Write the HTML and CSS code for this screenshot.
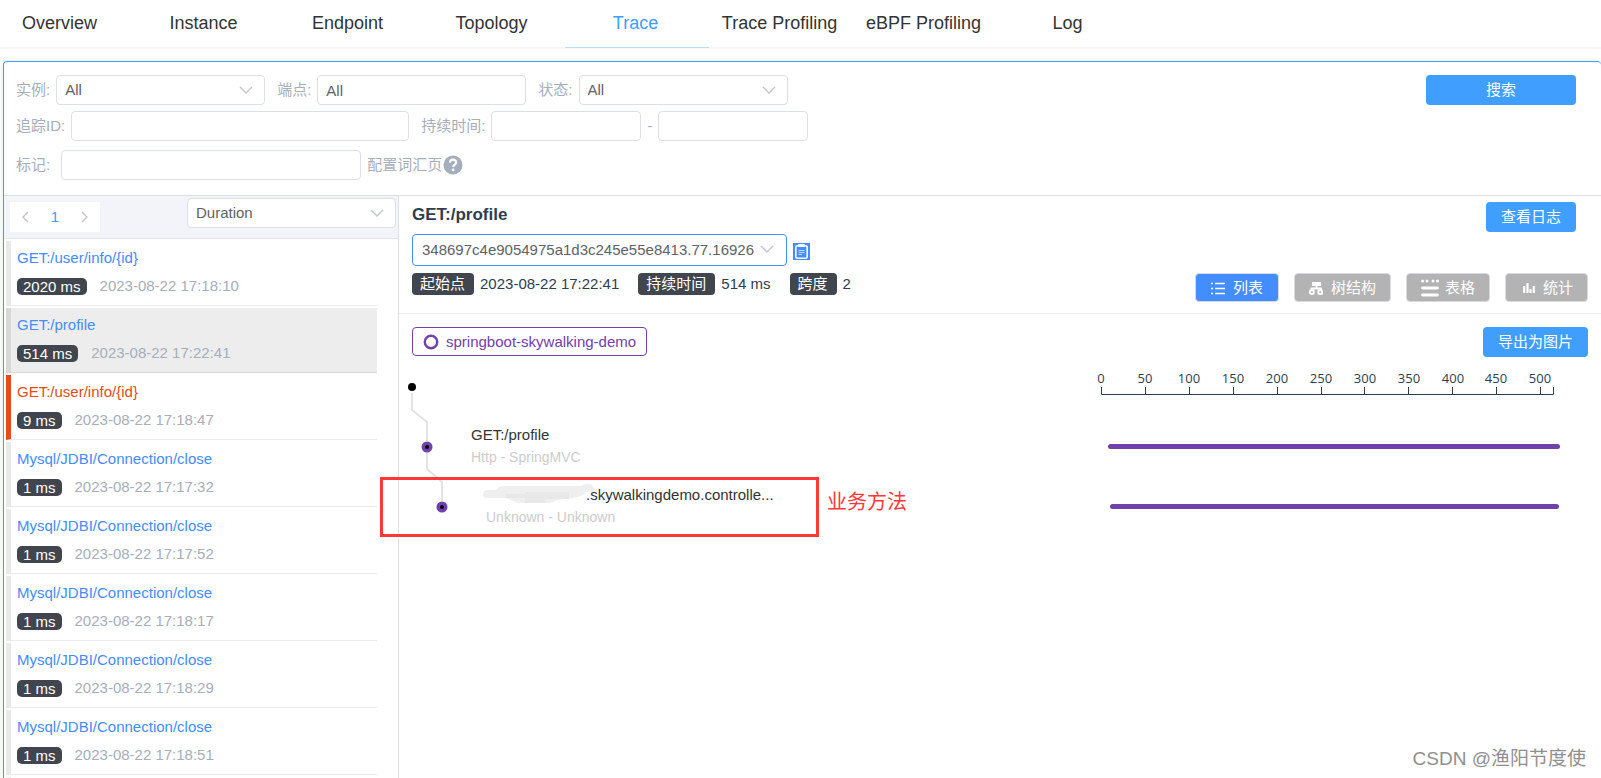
FILE: index.html
```html
<!DOCTYPE html>
<html lang="zh-CN">
<head>
<meta charset="utf-8">
<title>Trace</title>
<link rel="stylesheet" href="styles.css">
</head>
<body>
<nav class="tabs">
  <a class="tab" href="#">Overview</a>
  <a class="tab" href="#">Instance</a>
  <a class="tab" href="#">Endpoint</a>
  <a class="tab" href="#">Topology</a>
  <a class="tab active" href="#">Trace</a>
  <a class="tab" href="#">Trace Profiling</a>
  <a class="tab" href="#">eBPF Profiling</a>
  <a class="tab" href="#">Log</a>
</nav>

<main class="panel">
  <form class="filters">
    <div class="filter-row">
      <div class="field">
        <label for="instance">实例:</label>
        <span class="select"><select id="instance"><option>All</option></select><svg class="chevron" viewBox="0 0 14 8"><path d="M1 1l6 6 6-6"/></svg></span>
      </div>
      <div class="field">
        <label for="endpoint">端点:</label>
        <input class="box" id="endpoint" type="text" value="All">
      </div>
      <div class="field">
        <label for="status">状态:</label>
        <span class="select"><select id="status"><option>All</option></select><svg class="chevron" viewBox="0 0 14 8"><path d="M1 1l6 6 6-6"/></svg></span>
      </div>
      <button class="btn search" type="button">搜索</button>
    </div>
    <div class="filter-row">
      <div class="field">
        <label for="trace-id">追踪ID:</label>
        <input class="box wide" id="trace-id" type="text">
      </div>
      <div class="field">
        <label for="min">持续时间:</label>
        <input class="box short" id="min" type="text">
        <span>-</span>
        <input class="box short" type="text" aria-label="最大持续时间">
      </div>
    </div>
    <div class="filter-row tags-row">
      <label for="tags">标记:</label>
      <input class="box medium" id="tags" type="text">
      <span class="vocab">配置词汇页<svg class="help" viewBox="0 0 20 20"><circle cx="10" cy="10" r="9.5" fill="#a7aebb"/><path d="M6.9 7.6C7 5.600 8.300 4.700 10 4.700c1.800 0 3.200 1 3.200 2.700 0 2.200-2.900 2.300-2.900 4.500" fill="none" stroke="#fff" stroke-width="2.200"/><circle cx="10.200" cy="14.800" r="1.400" fill="#fff"/></svg></span>
    </div>
  </form>

  <div class="content">
    <aside class="sidebar">
      <div class="list-head">
        <div class="pager">
          <button type="button" aria-label="上一页"><svg viewBox="0 0 8 12"><path d="M7 1L2 6l5 5"/></svg></button>
          <span class="page">1</span>
          <button type="button" aria-label="下一页"><svg viewBox="0 0 8 12"><path d="M1 1l5 5-5 5"/></svg></button>
        </div>
        <span class="select"><select aria-label="排序"><option>Duration</option></select><svg class="chevron" viewBox="0 0 14 8"><path d="M1 1l6 6 6-6"/></svg></span>
      </div>
      <ul class="traces">
        <li><a href="#">GET:/user/info/{id}</a><div class="meta"><b>2020 ms</b><time>2023-08-22 17:18:10</time></div></li>
        <li class="selected"><a href="#">GET:/profile</a><div class="meta"><b>514 ms</b><time>2023-08-22 17:22:41</time></div></li>
        <li class="error"><a href="#">GET:/user/info/{id}</a><div class="meta"><b>9 ms</b><time>2023-08-22 17:18:47</time></div></li>
        <li><a href="#">Mysql/JDBI/Connection/close</a><div class="meta"><b>1 ms</b><time>2023-08-22 17:17:32</time></div></li>
        <li><a href="#">Mysql/JDBI/Connection/close</a><div class="meta"><b>1 ms</b><time>2023-08-22 17:17:52</time></div></li>
        <li><a href="#">Mysql/JDBI/Connection/close</a><div class="meta"><b>1 ms</b><time>2023-08-22 17:18:17</time></div></li>
        <li><a href="#">Mysql/JDBI/Connection/close</a><div class="meta"><b>1 ms</b><time>2023-08-22 17:18:29</time></div></li>
        <li><a href="#">Mysql/JDBI/Connection/close</a><div class="meta"><b>1 ms</b><time>2023-08-22 17:18:51</time></div></li>
        <li></li>
      </ul>
    </aside>

    <section class="detail">
      <header class="detail-head">
        <div class="title-row">
          <h1>GET:/profile</h1>
          <button class="btn" type="button">查看日志</button>
        </div>
        <div class="id-row">
          <span class="select trace-select"><select aria-label="追踪ID"><option>348697c4e9054975a1d3c245e55e8413.77.16926</option></select><svg class="chevron" viewBox="0 0 14 8"><path d="M1 1l6 6 6-6"/></svg></span>
          <button class="copy" type="button" aria-label="复制"><svg viewBox="0 0 17 17"><rect width="17" height="17" fill="#448dfe"/><rect x="2.800" y="2.800" width="11.400" height="12.400" rx="1.500" fill="none" stroke="#fff" stroke-width="1.600"/><rect x="5" y="1" width="7" height="3" rx="1" fill="#fff"/><path d="M5.500 7.500h6M5.500 9.500h6M5.500 11.500h3.500" stroke="#fff" stroke-width="1" opacity=".7"/></svg></button>
        </div>
        <div class="info-row">
          <div class="info"><span class="tag">起始点</span><span>2023-08-22 17:22:41</span></div>
          <div class="info"><span class="tag">持续时间</span><span>514 ms</span></div>
          <div class="info"><span class="tag">跨度</span><span>2</span></div>
          <div class="views">
            <button class="view on" type="button"><svg class="i14" viewBox="0 0 14 14"><path d="M4 2.500h10M4 7.500h10M4 12.500h10M0 2.500h2M0 7.500h2M0 12.500h2" stroke="#fff" stroke-width="1.700"/></svg>列表</button>
            <button class="view" type="button"><svg class="i14" viewBox="0 0 14 14"><path d="M3 1h9v4H3z" fill="#fff"/><path d="M7.500 4v3.500M2.500 10V7.500h9.500V10" fill="none" stroke="#fff" stroke-width="1.800"/><rect x="1" y="9.300" width="3.800" height="3.700" rx="1.200" fill="none" stroke="#fff" stroke-width="1.900"/><rect x="9.300" y="9.300" width="3.800" height="3.700" rx="1.200" fill="none" stroke="#fff" stroke-width="1.900"/></svg>树结构</button>
            <button class="view table" type="button"><svg class="i18" viewBox="0 0 18 18"><path d="M1.500 2h.01M6 2h.01M12 2h.01M16.500 2h.01" stroke="#fff" stroke-width="3" stroke-linecap="round"/><path d="M1.500 9h15M1.500 16h15" stroke="#fff" stroke-width="2.800" stroke-linecap="round"/></svg>表格</button>
            <button class="view stats" type="button"><svg class="i12" viewBox="0 0 12 12"><path d="M1.200 4v7M4.500 1v10M7.500 7v4M10.800 4v7" stroke="#fff" stroke-width="2.200"/></svg>统计</button>
          </div>
        </div>
      </header>

      <div class="legend-row">
        <span class="service"><svg viewBox="0 0 16 16"><circle cx="8" cy="8" r="6.200" fill="none" stroke="#7041ab" stroke-width="2.400"/></svg>springboot-skywalking-demo</span>
        <button class="btn" type="button">导出为图片</button>
      </div>

      <div class="chart">
        <svg class="tree" viewBox="0 0 440 190">
          <g fill="none" stroke="#e2e3e5" stroke-width="2"><path d="M13 36V53L28 65V84"/><path d="M28 96V112L43 125V144"/></g>
          <circle cx="13" cy="30" r="4"/>
          <g fill="#7041ab"><circle cx="28" cy="90" r="5.500"/><circle cx="43" cy="150" r="5.500"/></g>
          <circle cx="28" cy="90" r="2"/><circle cx="43" cy="150" r="2"/>
          <g class="span-name"><text x="72" y="83">GET:/profile</text><text x="187" y="143">.skywalkingdemo.controlle...</text></g>
          <g class="span-type"><text x="72" y="105">Http - SpringMVC</text><text x="87" y="165">Unknown - Unknown</text></g>
          <path d="M84 138q0-5 5-5h8q3-4 8-4h77q4-3 9-2 5 2 3 8h-7q-4 5-14 6l-14 2-8 3h-32l-12-5H88q-5-1-4-3z" fill="#efeff0"/>
          <path d="M106 137h20v4h-20zM126 135h20v11h-20zM146 135h24v7h-24z" fill="#e8e8e9"/>
        </svg>
        <svg class="timeline" viewBox="0 0 500 190">
          <path d="M13.500 30v7.500h452V30M57.500 30v7M101.500 30v7M145.500 30v7M189.500 30v7M233.500 30v7M276.500 30v7M320.500 30v7M364.500 30v7M408.500 30v7M452.500 30v7" fill="none" stroke="#2c3e50"/>
          <g class="ticks"><text x="13" y="26">0</text><text x="57" y="26">50</text><text x="101" y="26">100</text><text x="145" y="26">150</text><text x="189" y="26">200</text><text x="233" y="26">250</text><text x="277" y="26">300</text><text x="321" y="26">350</text><text x="365" y="26">400</text><text x="408" y="26">450</text><text x="452" y="26">500</text></g>
          <rect x="20" y="87" width="452" height="5" rx="2.500" fill="#7041ab"/>
          <rect x="22" y="147" width="449" height="5" rx="2.500" fill="#7041ab"/>
        </svg>
        <div class="callout"><span>业务方法</span></div>
      </div>
    </section>
  </div>
</main>
<div class="watermark">CSDN @渔阳节度使</div>
</body>
</html>
```

FILE: styles.css
```css
* {
  box-sizing: border-box;
}

body {
  margin: 0;
  height: 100vh;
  display: flex;
  flex-direction: column;
  overflow: hidden;
  background: #fff;
  color: #2c3e50;
  font: 15px/20px "Liberation Sans", "Noto Sans CJK SC", sans-serif;
}

a {
  text-decoration: none;
}

button,
input,
select {
  font: inherit;
  margin: 0;
}

button {
  padding: 0;
  border: 0;
  cursor: pointer;
}

/* Tabs */
.tabs {
  display: flex;
  flex: none;
  margin-left: -11px;
  border-bottom: 2px solid #f5f6f7;
}

.tab {
  position: relative;
  flex: none;
  width: 144px;
  height: 47px;
  padding-right: 3px;
  text-align: center;
  font-size: 18px;
  line-height: 46px;
  color: #333;
}

.tab.active {
  color: #409eff;
}

.tab.active::after {
  content: "";
  position: absolute;
  left: 0;
  right: 0;
  bottom: -1px;
  height: 1px;
  background: #bcdcfb;
}

/* Panel */
.panel {
  flex: 1;
  min-height: 0;
  display: flex;
  flex-direction: column;
  margin: 12px 0 0 3px;
  border: 1px solid #409eff;
  border-width: 1px 0 0 1px;
  border-radius: 4px 4px 0 0;
  box-shadow: 0 0 6px rgba(0, 0, 0, 0.1);
}

.filters {
  display: flex;
  flex-direction: column;
  flex: none;
  gap: 6px;
  padding: 13px 25px 15px 12px;
  border-bottom: 1px solid #dcdfe6;
  color: #a7aebb;
}

.filter-row {
  display: flex;
  align-items: center;
  gap: 12px;
}

.tags-row {
  gap: 6px;
  margin-top: 3px;
}

.tags-row label {
  margin-right: 5px;
}

.field {
  display: flex;
  align-items: center;
  gap: 6px;
}

.vocab {
  display: flex;
  align-items: center;
  gap: 1px;
}

.help {
  width: 20px;
  height: 20px;
}

.box,
.select select {
  width: 209px;
  height: 30px;
  padding: 0 8px;
  border: 1px solid #dcdfe6;
  border-radius: 4px;
  background: #fff;
  color: #606266;
  outline: 0;
}

.box.wide {
  width: 338px;
}

.box.medium {
  width: 300px;
}

.box.short {
  width: 150px;
}

.select {
  position: relative;
  display: flex;
}

.select select {
  appearance: none;
}

.chevron {
  position: absolute;
  right: 12px;
  top: 11px;
  width: 14px;
  height: 8px;
  pointer-events: none;
}

.chevron path,
.pager path {
  fill: none;
  stroke: #c0c4cc;
  stroke-width: 1.3;
}

.btn {
  height: 30px;
  padding: 0 15px;
  border-radius: 4px;
  background: #409eff;
  color: #fff;
}

.search {
  width: 150px;
  margin-left: auto;
}

.content {
  flex: 1;
  min-height: 0;
  display: flex;
}

/* Trace list */
.sidebar {
  flex: none;
  width: 395px;
  overflow: hidden;
  border-right: 1px solid #dcdfe6;
}

.list-head {
  display: flex;
  justify-content: space-between;
  align-items: flex-start;
  height: 43px;
  padding: 2px 2px 0 6px;
  border-bottom: 1px solid #e3e5ea;
  background: #f3f4f9;
}

.pager {
  display: flex;
  margin-top: 4px;
  background: #fff;
  line-height: 30px;
  text-align: center;
}

.pager > * {
  width: 30px;
  height: 30px;
  background: none;
}

.pager svg {
  display: block;
  width: 8px;
  height: 12px;
  margin: auto;
}

.page {
  color: #409eff;
}

.traces {
  display: flex;
  flex-direction: column;
  gap: 2px;
  margin: 0;
  padding: 2px 21px 0 2px;
  list-style: none;
}

.traces li {
  height: 65px;
  padding: 7px 0 0 6px;
  border-left: 5px solid #e9e9ea;
  border-bottom: 1px solid #ebebed;
}

.traces a {
  display: block;
  color: #448dfe;
}

.meta {
  display: flex;
  align-items: center;
  gap: 13px;
  margin-top: 8px;
  color: #a7aebb;
}

.meta b {
  height: 17px;
  padding: 0 6px;
  border-radius: 5px;
  background: #40454e;
  color: #fff;
  font-weight: 400;
  line-height: 17px;
}

.traces .selected {
  border-left-color: #d8d8d8;
  border-bottom-color: #d8d8d8;
  background: #ededed;
}

.traces .error {
  border-left-color: #e54c17;
}

.traces .error a {
  color: #e54c17;
}

/* Trace detail */
.detail {
  flex: 1;
  min-width: 0;
}

.detail-head {
  padding: 6px 13px 11px 13px;
  border-bottom: 1px solid #eee;
}

.title-row {
  display: flex;
  justify-content: space-between;
  align-items: flex-start;
  height: 32px;
  padding-right: 12px;
}

h1 {
  margin: 0;
  font-size: 17px;
  line-height: 26px;
}

.id-row {
  display: flex;
  align-items: center;
  gap: 6px;
}

.trace-select select {
  width: 375px;
  height: 32px;
  padding-left: 9px;
  padding-right: 30px;
  border-color: #448dfe;
}

.trace-select .chevron {
  right: 13px;
}

.copy {
  display: flex;
  margin-top: 2px;
  background: none;
}

.copy svg {
  width: 17px;
  height: 17px;
}

.info-row {
  display: flex;
  align-items: flex-start;
  gap: 19px;
  margin-top: 7px;
}

.info {
  display: flex;
  gap: 6px;
  line-height: 22px;
}

.tag {
  height: 22px;
  padding: 0 9px 0 8px;
  border-radius: 4px;
  background: #40454e;
  color: #fff;
}

.views {
  display: flex;
  gap: 15px;
  margin-left: auto;
}

.view {
  display: flex;
  align-items: center;
  gap: 8px;
  height: 29px;
  padding: 0 14px;
  border: 1px solid #d9dbe0;
  border-radius: 4px;
  background: #b3b3b3;
  color: #fff;
}

.view.on {
  padding: 0 15px;
  background: #448dfe;
}

.view.table {
  gap: 6px;
}

.view.stats {
  padding-left: 17px;
}

.i12 {
  width: 12px;
  height: 12px;
}

.i14 {
  width: 14px;
  height: 14px;
}

.i18 {
  width: 18px;
  height: 18px;
}

.legend-row {
  display: flex;
  justify-content: space-between;
  align-items: flex-start;
  padding: 13px 13px 0 13px;
}

.service {
  display: flex;
  align-items: center;
  gap: 7px;
  height: 29px;
  padding: 0 10px;
  border: 1px solid #7041ab;
  border-radius: 4px;
  color: #7041ab;
}

.service svg {
  width: 16px;
  height: 16px;
}

.chart {
  position: relative;
  display: flex;
  justify-content: space-between;
  padding-right: 13px;
}

.tree {
  flex: none;
  width: 440px;
  height: 190px;
}

.timeline {
  flex: none;
  width: 500px;
  height: 190px;
}

.span-name {
  font-size: 15px;
  fill: #333;
}

.span-type {
  font-size: 14px;
  fill: #ccc;
}

.ticks {
  font-family: "Open Sans", sans-serif;
  font-size: 13px;
  text-anchor: middle;
  fill: #2c3e50;
}

.callout {
  position: absolute;
  left: -19px;
  top: 120px;
  width: 439px;
  height: 60px;
  border: 3px solid #fc3838;
}

.callout span {
  position: absolute;
  left: 100%;
  top: 8px;
  margin-left: 11px;
  white-space: nowrap;
  font-size: 20px;
  line-height: 28px;
  color: #fc3838;
}

.watermark {
  position: absolute;
  right: 15px;
  bottom: 5px;
  font-size: 19px;
  line-height: 28px;
  color: #8f8f8f;
}
```
